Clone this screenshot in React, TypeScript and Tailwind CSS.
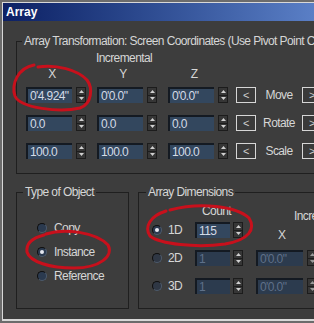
import React from "react";

const txt = "font-['Liberation_Sans',Arial,sans-serif] text-[12px] tracking-[-0.6px]";

function Spinner({ dim = false }: { dim?: boolean }) {
  const c = dim ? "#9a9a9a" : "#d0d0d0";
  return (
    <div className="flex h-[16px] w-[10px] flex-col border border-[#1c1c1c] bg-[#363636]">
      <div className="flex flex-1 items-center justify-center border-b border-[#1c1c1c]">
        <svg width="5" height="3" viewBox="0 0 5 3">
          <path d="M2.5 0L5 3H0z" fill={c} />
        </svg>
      </div>
      <div className="flex flex-1 items-center justify-center">
        <svg width="5" height="3" viewBox="0 0 5 3">
          <path d="M0 0h5L2.5 3z" fill={c} />
        </svg>
      </div>
    </div>
  );
}

function Field({ value, className, dim = false }: { value: string; className: string; dim?: boolean }) {
  return (
    <div
      className={`flex h-[16px] items-center border-l-2 border-t-2 border-[#141a22] pl-[2px] leading-none ${
        dim ? "bg-[#2c3b4e] text-[#5f7089]" : "bg-[#33475e] text-[#d4dbe6]"
      } ${className}`}
    >
      {value}
    </div>
  );
}

function ArrowBtn({ dir }: { dir: string }) {
  return (
    <div className="flex h-[16px] w-[20px] shrink-0 items-center justify-center border border-[#d6d6d6] bg-[#3a3a3a] text-[11px] leading-none text-[#d0d0d0]">
      {dir}
    </div>
  );
}

function Radio({ on = false, dim = false }: { on?: boolean; dim?: boolean }) {
  return (
    <div
      className={`flex h-[10px] w-[10px] items-center justify-center rounded-full border border-b-[#4d5b6c] border-l-[#0f0f0f] border-r-[#4d5b6c] border-t-[#0f0f0f] ${
        dim ? "bg-[#2f3744]" : "bg-[#2b3a4f]"
      }`}
    >
      {on && <div className="h-[4px] w-[4px] rounded-full bg-[#e6e8f0]" />}
    </div>
  );
}

const rows = [
  { vals: ["0'4.924\"", "0'0.0\"", "0'0.0\""], label: "Move" },
  { vals: ["0.0", "0.0", "0.0"], label: "Rotate" },
  { vals: ["100.0", "100.0", "100.0"], label: "Scale" },
];

export default function App() {
  return (
    <div className={`relative h-[323px] w-[314px] overflow-hidden bg-[#6c6c6c] pl-[2px] pt-[2px] ${txt}`}>
      <div className="flex h-[319px] flex-col border-b-2 border-l border-t border-[#d8d8d8]">
        {/* title bar */}
        <div className="flex h-[18px] items-center bg-gradient-to-r from-[#0d2064] to-[#5a7fc6] pl-[3px] text-[12px] font-bold tracking-normal text-white">
          Array
        </div>

        <div className="flex-1 overflow-hidden bg-[#3d3d3d] pl-[13px] text-[#d6d6d6]">
          {/* Array Transformation */}
          <fieldset className="mt-[13px] h-[140px] w-[420px] border border-[#1f1f1f] px-0">
            <legend className="ml-[5px] px-[2px] leading-[14px] whitespace-nowrap">
              Array Transformation: Screen Coordinates (Use Pivot Point Center)
            </legend>
            <div className="mt-[3px] pl-[79px] leading-[14px]">Incremental</div>
            <div className="mt-[2px] flex gap-[11px] pl-[9px] leading-[14px]">
              {["X", "Y", "Z"].map((l) => (
                <div key={l} className="w-[60px]">
                  <div className="w-[52px] text-center">{l}</div>
                </div>
              ))}
            </div>
            <div className="mt-[6px] flex flex-col gap-[12px] pl-[9px]">
              {rows.map((r) => (
                <div key={r.label} className="flex items-center">
                  <div className="flex shrink-0 gap-[11px]">
                    {r.vals.map((v, i) => (
                      <div key={i} className="flex w-[60px] items-center gap-[4px]">
                        <Field value={v} className="w-[46px]" />
                        <Spinner />
                      </div>
                    ))}
                  </div>
                  <div className="ml-[8px]">
                    <ArrowBtn dir="<" />
                  </div>
                  <div className="w-[46px] shrink-0 text-center leading-[14px]">{r.label}</div>
                  <ArrowBtn dir=">" />
                </div>
              ))}
            </div>
          </fieldset>

          <div className="mt-[11px] flex gap-[9px]">
            {/* Type of Object */}
            <fieldset className="h-[124px] w-[113px] shrink-0 border border-[#1f1f1f] px-0">
              <legend className="ml-[6px] px-[2px] leading-[14px]">Type of Object</legend>
              <div className="mt-[22px] flex flex-col gap-[10px] pl-[20px]">
                {[
                  { l: "Copy", on: false },
                  { l: "Instance", on: true },
                  { l: "Reference", on: false },
                ].map((o) => (
                  <div key={o.l} className="flex h-[14px] items-center gap-[7px]">
                    <Radio on={o.on} />
                    <span className="leading-[14px]">{o.l}</span>
                  </div>
                ))}
              </div>
            </fieldset>

            {/* Array Dimensions */}
            <fieldset className="h-[124px] w-[260px] shrink-0 border border-[#1f1f1f] px-0">
              <legend className="ml-[7px] px-[2px] leading-[14px]">Array Dimensions</legend>
              <div className="flex gap-[13px]">
                <div className="flex flex-col">
                  <div className="mt-[5px] pl-[63px] leading-[14px]">Count</div>
                  <div className="mt-[4px] flex flex-col gap-[12px] pl-[13px]">
                    {[
                      { l: "1D", v: "115", on: true },
                      { l: "2D", v: "1", on: false },
                      { l: "3D", v: "1", on: false },
                    ].map((d) => (
                      <div key={d.l} className="flex h-[16px] items-center">
                        <Radio on={d.on} dim={!d.on} />
                        <span className="ml-[6px] w-[27px] leading-[14px]">{d.l}</span>
                        <Field value={d.v} dim={!d.on} className="w-[35px]" />
                        <div className="ml-[3px]">
                          <Spinner />
                        </div>
                      </div>
                    ))}
                  </div>
                </div>
                <div className="flex flex-col">
                  <div className="mt-[10px] whitespace-nowrap pl-[38px] leading-[14px]">Incremental Row Offsets</div>
                  <div className="mt-[5px] pl-[22px] leading-[14px]">X</div>
                  <div className="mt-[8px] flex flex-col gap-[12px]">
                    {[0, 1].map((i) => (
                      <div key={i} className="flex items-center gap-[4px]">
                        <Field value={"0'0.0\""} dim className="w-[47px]" />
                        <Spinner dim />
                      </div>
                    ))}
                  </div>
                </div>
              </div>
            </fieldset>
          </div>
        </div>
      </div>

      {/* red hand-drawn marks */}
      <svg
        className="pointer-events-none absolute left-0 top-0"
        width="314"
        height="323"
        viewBox="0 0 314 323"
        fill="none"
        stroke="#c8101c"
        strokeWidth="3"
        strokeLinecap="round"
      >
        <path d="M34 65 C18 68 11 84 15 96 C20 108 60 113 80 108 C92 104 93 88 87 80 C78 70 56 64 38 67" />
        <path d="M46 234 C64 228 96 232 108 245 C114 256 100 268 74 268 C50 268 30 262 27 252 C26 244 32 238 44 235" />
        <path d="M170 210 C200 202 236 206 249 218 C256 229 249 240 225 244 C196 248 160 244 150 236 C144 227 150 216 166 211" />
      </svg>
    </div>
  );
}
